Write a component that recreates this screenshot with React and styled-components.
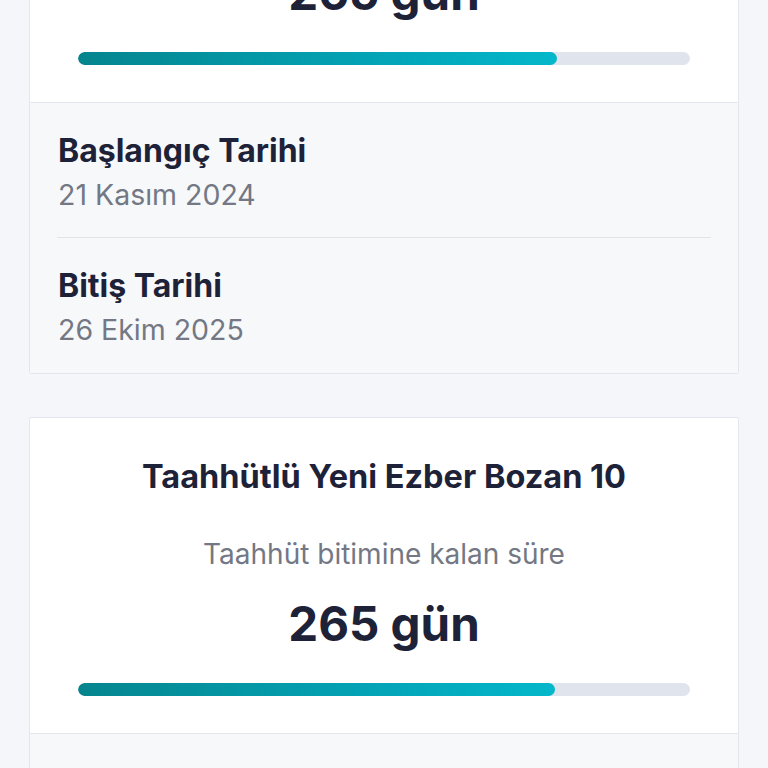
import React from "react";
import styled, { createGlobalStyle } from "styled-components";

const Global = createGlobalStyle`
  html, body {
    margin: 0;
    padding: 0;
    background: #f5f6f9;
    overflow: hidden;
  }
  body {
    font-family: "Inter", "Noto Sans", sans-serif;
    color: #1e2238;
  }
`;

const Screen = styled.main`
  display: flex;
  flex-direction: column;
  gap: 43px;
  padding: 0 29px 40px;
  margin-top: ${(p) => p.$scroll}px;
`;

const Card = styled.section`
  display: flex;
  flex-direction: column;
  background: #ffffff;
  border: 1px solid #e3e6ec;
  border-radius: 2px;
  overflow: hidden;
`;

const Summary = styled.div`
  display: flex;
  flex-direction: column;
  align-items: center;
  padding: 41px 48px 37px;
  text-align: center;
  border-bottom: 1px solid #e3e6ec;
`;

const PlanName = styled.h2`
  margin: 0;
  font-size: 32.5px;
  line-height: 36px;
  font-weight: 700;
  color: #1e2238;
  white-space: nowrap;
`;

const Caption = styled.p`
  margin: 42px 0 0;
  font-size: 28px;
  line-height: 34px;
  font-weight: 400;
  color: #737884;
`;

const Remaining = styled.div`
  margin-top: 25px;
  font-size: 47.5px;
  line-height: 56px;
  font-weight: 700;
  color: #1e2238;
`;

const Track = styled.div`
  align-self: stretch;
  margin-top: 31px;
  height: 13px;
  border-radius: 7px;
  background: #e0e4ec;
  overflow: hidden;
  display: flex;
`;

const Fill = styled.div`
  height: 100%;
  border-radius: 7px;
  background: linear-gradient(90deg, #05858e 0%, #03a3b5 60%, #04b7ca 100%);
`;

const Dates = styled.div`
  display: flex;
  flex-direction: column;
  padding: 0 27px 1px;
  background: #f7f8fa;
`;

const DateRow = styled.div`
  display: flex;
  flex-direction: column;
  gap: 8px;
  padding: 30px 1px 24px;
  & + & {
    border-top: 1px solid #e1e4e9;
  }
`;

const DateLabel = styled.div`
  font-size: 32px;
  line-height: 36px;
  font-weight: 700;
  color: #1e2238;
`;

const DateValue = styled.div`
  font-size: 28.5px;
  line-height: 36px;
  font-weight: 400;
  color: #737884;
`;

const plans = [
  {
    name: "Taahhütlü Yeni Ezber Bozan 10",
    days: 265,
    progress: 78.2,
    start: "21 Kasım 2024",
    end: "26 Ekim 2025",
  },
  {
    name: "Taahhütlü Yeni Ezber Bozan 10",
    days: 265,
    progress: 77.9,
    start: "21 Kasım 2024",
    end: "26 Ekim 2025",
  },
];

function PlanCard({ plan }) {
  return (
    <Card>
      <Summary>
        <PlanName>{plan.name}</PlanName>
        <Caption>Taahhüt bitimine kalan süre</Caption>
        <Remaining>{plan.days} gün</Remaining>
        <Track>
          <Fill style={{ width: `${plan.progress}%` }} />
        </Track>
      </Summary>
      <Dates>
        <DateRow>
          <DateLabel>Başlangıç Tarihi</DateLabel>
          <DateValue>{plan.start}</DateValue>
        </DateRow>
        <DateRow>
          <DateLabel>Bitiş Tarihi</DateLabel>
          <DateValue>{plan.end}</DateValue>
        </DateRow>
      </Dates>
    </Card>
  );
}

export default function App() {
  return (
    <>
      <Global />
      <Screen $scroll={-214}>
        {plans.map((p, i) => (
          <PlanCard key={i} plan={p} />
        ))}
      </Screen>
    </>
  );
}
